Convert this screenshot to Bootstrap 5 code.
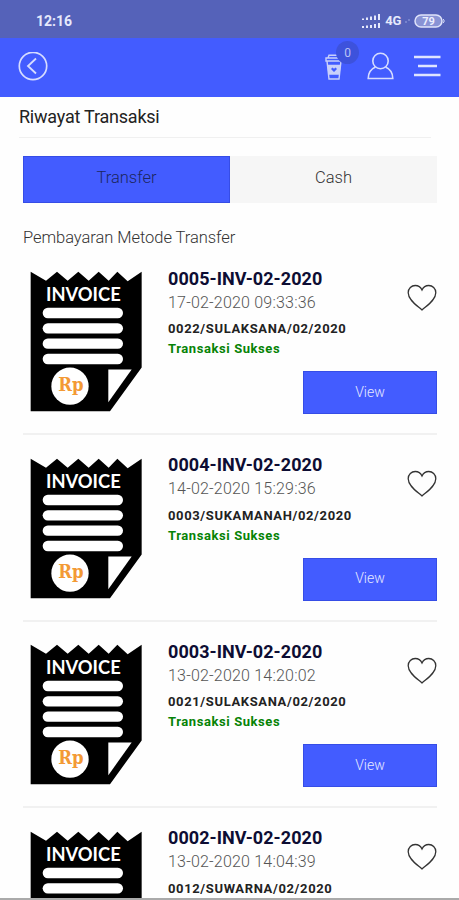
<!DOCTYPE html>
<html lang="id">
<head>
<meta charset="utf-8">
<meta name="viewport" content="width=device-width, initial-scale=1">
<title>Riwayat Transaksi</title>
<link href="https://cdn.jsdelivr.net/npm/bootstrap@5.3.0/dist/css/bootstrap.min.css" rel="stylesheet">
<style>
body{font-family:Roboto,"Liberation Sans",sans-serif;background:#fefefe;height:900px}
svg{display:block;flex:none}
.screen{width:459px;height:900px;border-bottom:2px solid #aaa}
.status{height:38px;background:#5562b9;color:#e6e9fc;padding:4px 14px 0 36px;font-size:14px;font-weight:700}
.net{font-size:13px;letter-spacing:-.3px}
.topbar{height:58.5px;background:#435cff;padding:0 18px}
.person{margin:-2px 20px 0 24px}
.count{top:3px;left:336px;width:23px;height:23px;background:#3d52dc;color:#b9c2f5;font-size:12px}
.title{margin:0 28px 0 19px;height:41.5px;border-bottom:1px solid #f0f0f0;font-size:18px;letter-spacing:-.22px;color:#222}
.tabs{margin:17.5px 22px 0 23px;height:47px;font-size:16.5px;font-weight:300;background:#f6f6f6}
.tabs .on{background:#435cff;color:#1c2660;box-shadow:inset 0 0 0 1px #364de6;padding-bottom:1px}
.tabs .off{color:#333;padding-bottom:1px}
.method{height:46px;padding:10px 0 0 23px;font-size:16.5px;line-height:50px;font-weight:300;color:#333;letter-spacing:-.05px}
.entry{height:186.5px;margin:0 22px 0 23px;border-bottom:2px solid #f1f1f1;padding:22.5px 0 0 7px}
.info{margin:-3.5px 0 0 26px;width:269px}
.inv{font-size:18px;line-height:22px;font-weight:700;color:#0d0d33;letter-spacing:.07px}
.date{font-size:16px;line-height:24px;font-weight:300;color:#555;margin-top:1px;letter-spacing:.2px}
.code{font-size:13px;line-height:20px;font-weight:700;color:#222;margin-top:4.5px;letter-spacing:.63px}
.state{font-size:13px;line-height:20px;font-weight:700;color:#068306;letter-spacing:.58px}
.heart{top:16px;right:0}
.view{width:134px;height:43px;background:#435cff;color:#e6e9ff;font-size:14px;font-weight:300;box-shadow:inset 0 0 0 1px #364de6;margin-top:12px;padding:0 0 1px}
</style>
<script src="https://cdn.jsdelivr.net/npm/bootstrap@5.3.0/dist/js/bootstrap.bundle.min.js"></script>
</head>
<body class="overflow-hidden">
<svg width="0" height="0" class="position-absolute">
<symbol id="invoice" viewBox="45 48 336 422">
<path d="M47 50L93 77 126 50 158 77 190 50 221 77 251 50 281 77 307 50 338 78 380 50V337L285 468H47Z" fill="#000"/>
<text x="93" y="137" font-family="Lato,sans-serif" font-weight="700" font-size="58" textLength="224" lengthAdjust="spacingAndGlyphs" fill="#fff">INVOICE</text>
<g fill="#fff"><rect x="83" y="158" width="241" height="31" rx="15.500"/><rect x="83" y="204" width="241" height="31" rx="15.500"/><rect x="83" y="250" width="241" height="31" rx="15.500"/><rect x="83" y="296" width="241" height="31" rx="15.500"/><circle cx="165" cy="393" r="56"/><path d="M280 343H350L280 441Z"/></g>
<text x="130" y="407" font-family="'DejaVu Serif',serif" font-weight="700" font-size="53" textLength="76" lengthAdjust="spacingAndGlyphs" fill="#f39a35">Rp</text>
</symbol>
<symbol id="heart" viewBox="0 0 30 28"><path d="M15 26C10 21.500 1.200 16 1.200 8.700 1.200 4.500 4.500 1.500 8.200 1.500 11.500 1.500 13.800 3.300 15 6 16.200 3.300 18.500 1.500 21.800 1.500 25.500 1.500 28.800 4.500 28.800 8.700 28.800 16 20 21.500 15 26Z" fill="none" stroke="#333" stroke-width="1.300"/></symbol>
</svg>
<main class="screen overflow-hidden">
<div class="status d-flex align-items-center justify-content-between">
<span>12:16</span>
<div class="d-flex align-items-center">
<svg width="19" height="15" viewBox="0 0 19 15" fill="none" stroke="#e6e9fc" stroke-width="2"><path d="M1 6V4.500M5 6V3.500M9 6V2.500M13 6V1.500M17 6V0M1 14v-2M5 14v-2.500M9 14v-3M13 14v-4M17 14V9"/></svg>
<span class="net ms-1">4G</span>
<svg class="ms-1" width="5" height="6" viewBox="0 0 5 6"><path d="M1 5V3M3 2h2" stroke="#9aa4e0"/></svg>
<svg class="ms-1" width="31" height="15" viewBox="0 0 31 15"><rect x="1" y="1" width="27" height="12" rx="6" fill="#8993d5" stroke="#dfe3fa" stroke-width="1.500"/><path d="M29 5c1.500 1 1.500 3 0 4" stroke="#dfe3fa" fill="none"/><text x="14.500" y="11" text-anchor="middle" font-family="Roboto,sans-serif" font-size="11" font-weight="700" fill="#eef0ff">79</text></svg>
</div>
</div>
<nav class="topbar d-flex align-items-center position-relative">
<svg width="30" height="30" viewBox="0 0 30 30" fill="none" stroke="#d6dcff"><circle cx="15" cy="14" r="13.700" stroke-width="1.700"/><path d="M18 6.500L10 14l8 7.500" stroke-width="1.800"/></svg>
<div class="ms-auto d-flex align-items-center">
<svg width="18" height="26" viewBox="0 0 18 26" fill="none" stroke="#c9d0fa" stroke-width="1.400"><path d="M3 4L4 1.200H14L15 4M1 4H17V7H1ZM2 7L4 25H14L16 7"/><path d="M3 11.500H15L14 20H4Z" fill="#c9d0fa"/><path d="M9 18L6 15 7.500 13.500 9 14.700 10.500 13.500 12 15Z" fill="#435cff" stroke="none"/></svg>
<svg class="person" width="27" height="28" viewBox="0 0 27 28" fill="none" stroke="#d6dcff" stroke-width="1.600"><circle cx="13.500" cy="9" r="7.700"/><path d="M8.500 15C4 17 1.200 20.500 1.200 26.500H25.800C25.800 20.500 23 17 18.500 15"/></svg>
<svg width="27" height="24" viewBox="0 0 27 24" stroke="#dfe4ff" stroke-width="2.300"><path d="M0 2H26.500M4 11H23M0 20H26.500"/></svg>
</div>
<span class="count position-absolute rounded-circle d-flex align-items-center justify-content-center">0</span>
</nav>
<h1 class="title d-flex align-items-center mb-0 fw-normal">Riwayat Transaksi</h1>
<div class="tabs d-flex text-center"><div class="on w-50 d-flex align-items-center justify-content-center">Transfer</div><div class="off w-50 d-flex align-items-center justify-content-center">Cash</div></div>
<div class="method">Pembayaran Metode Transfer</div>
<article class="entry d-flex"><svg width="112" height="141"><use href="#invoice"/></svg><div class="info position-relative d-flex flex-column align-items-start"><div class="inv">0005-INV-02-2020</div><div class="date">17-02-2020 09:33:36</div><div class="code">0022/SULAKSANA/02/2020</div><div class="state">Transaksi Sukses</div><button class="view btn rounded-0 border-0 align-self-end flex-shrink-0">View</button><svg class="heart position-absolute" width="30" height="28"><use href="#heart"/></svg></div></article>
<article class="entry d-flex"><svg width="112" height="141"><use href="#invoice"/></svg><div class="info position-relative d-flex flex-column align-items-start"><div class="inv">0004-INV-02-2020</div><div class="date">14-02-2020 15:29:36</div><div class="code">0003/SUKAMANAH/02/2020</div><div class="state">Transaksi Sukses</div><button class="view btn rounded-0 border-0 align-self-end flex-shrink-0">View</button><svg class="heart position-absolute" width="30" height="28"><use href="#heart"/></svg></div></article>
<article class="entry d-flex"><svg width="112" height="141"><use href="#invoice"/></svg><div class="info position-relative d-flex flex-column align-items-start"><div class="inv">0003-INV-02-2020</div><div class="date">13-02-2020 14:20:02</div><div class="code">0021/SULAKSANA/02/2020</div><div class="state">Transaksi Sukses</div><button class="view btn rounded-0 border-0 align-self-end flex-shrink-0">View</button><svg class="heart position-absolute" width="30" height="28"><use href="#heart"/></svg></div></article>
<article class="entry d-flex"><svg width="112" height="141"><use href="#invoice"/></svg><div class="info position-relative d-flex flex-column align-items-start"><div class="inv">0002-INV-02-2020</div><div class="date">13-02-2020 14:04:39</div><div class="code">0012/SUWARNA/02/2020</div><div class="state">Transaksi Sukses</div><button class="view btn rounded-0 border-0 align-self-end flex-shrink-0">View</button><svg class="heart position-absolute" width="30" height="28"><use href="#heart"/></svg></div></article>
</main>
</body>
</html>
